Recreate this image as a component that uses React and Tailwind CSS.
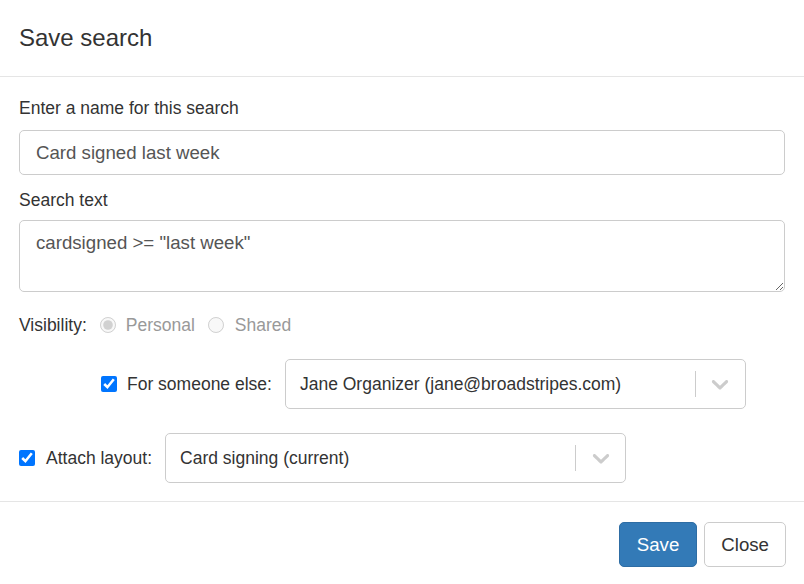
import React from 'react';

const FONT = { fontFamily: '"Liberation Sans", Arial, sans-serif' };

// react-select style indicator
const Chevron = () => (
  <svg viewBox="0 0 20 20" width="28" height="28" className="fill-[#cccccc]">
    <path d="M4.516 7.548c0.436-0.446 1.043-0.481 1.576 0l3.908 3.747 3.908-3.747c0.533-0.481 1.141-0.446 1.574 0 0.436 0.445 0.408 1.197 0 1.615-0.406 0.418-4.695 4.502-4.695 4.502-0.217 0.223-0.502 0.335-0.787 0.335s-0.57-0.112-0.789-0.335c0 0-4.287-4.084-4.695-4.502s-0.436-1.17 0-1.615z" />
  </svg>
);

const SelectBox = ({ value }) => (
  <div className="w-[461px] h-[50px] flex items-center border border-[#cccccc] rounded-[5px] bg-white">
    <div className="flex-1 pl-[14px] text-[17.5px] text-[#333333] truncate">{value}</div>
    <div className="w-px h-[26px] bg-[#cccccc]" />
    <div className="w-[49px] flex items-center justify-center">
      <Chevron />
    </div>
  </div>
);

const App = () => {
  return (
    <div style={FONT} className="w-[804px] h-[584px] bg-white text-[#333333] overflow-hidden flex flex-col">
      {/* Header */}
      <div className="h-[77px] shrink-0 border-b border-[#e5e5e5] flex items-center px-[19px]">
        <h4 className="text-[24px] leading-none text-[#333333]">Save search</h4>
      </div>

      {/* Body */}
      <div className="px-[19px] pt-[21px] pb-[18px]">
        <label className="block text-[17.5px] leading-[20px] mb-[12px]">Enter a name for this search</label>
        <input
          type="text"
          defaultValue="Card signed last week"
          className="block w-full h-[45px] px-[16px] border border-[#cccccc] rounded-[5px] text-[18.67px] text-[#555555] outline-none"
          style={FONT}
        />

        <label className="block text-[17.5px] leading-[20px] mt-[15px] mb-[10px]">Search text</label>
        <textarea
          defaultValue={'cardsigned >= "last week"'}
          className="block w-full h-[72px] px-[16px] pt-[10px] border border-[#cccccc] rounded-[5px] text-[18.67px] leading-[24px] text-[#555555] outline-none"
          style={FONT}
        />

        <div className="flex items-center h-[24px] mt-[21px] text-[17.5px]">
          <span>Visibility:</span>
          <label className="flex items-center ml-[13px] text-[#999999]">
            <input type="radio" name="vis" defaultChecked disabled className="w-[16px] h-[16px] m-0" />
            <span className="ml-[10px]">Personal</span>
          </label>
          <label className="flex items-center ml-[13px] text-[#999999]">
            <input type="radio" name="vis" disabled className="w-[16px] h-[16px] m-0" />
            <span className="ml-[11px]">Shared</span>
          </label>
        </div>

        <div className="flex items-center mt-[22px] ml-[82px]">
          <input type="checkbox" defaultChecked className="w-[16px] h-[16px] m-0" />
          <span className="ml-[10px] mr-[13px] text-[17.5px]">For someone else:</span>
          <SelectBox value="Jane Organizer (jane@broadstripes.com)" />
        </div>

        <div className="flex items-center mt-[24px]">
          <input type="checkbox" defaultChecked className="w-[16px] h-[16px] m-0" />
          <span className="ml-[11px] mr-[13px] text-[17.5px]">Attach layout:</span>
          <SelectBox value="Card signing (current)" />
        </div>
      </div>

      {/* Footer */}
      <div className="border-t border-[#e5e5e5] flex justify-end gap-[7px] px-[18px] pt-[20px]">
        <button className="h-[45px] px-[17px] rounded-[5px] bg-[#337ab7] border border-[#2e6da4] text-white text-[18.67px]" style={FONT}>
          Save
        </button>
        <button className="h-[45px] px-[16px] rounded-[5px] bg-white border border-[#cccccc] text-[#333333] text-[18.67px]" style={FONT}>
          Close
        </button>
      </div>
    </div>
  );
};

export default App;
